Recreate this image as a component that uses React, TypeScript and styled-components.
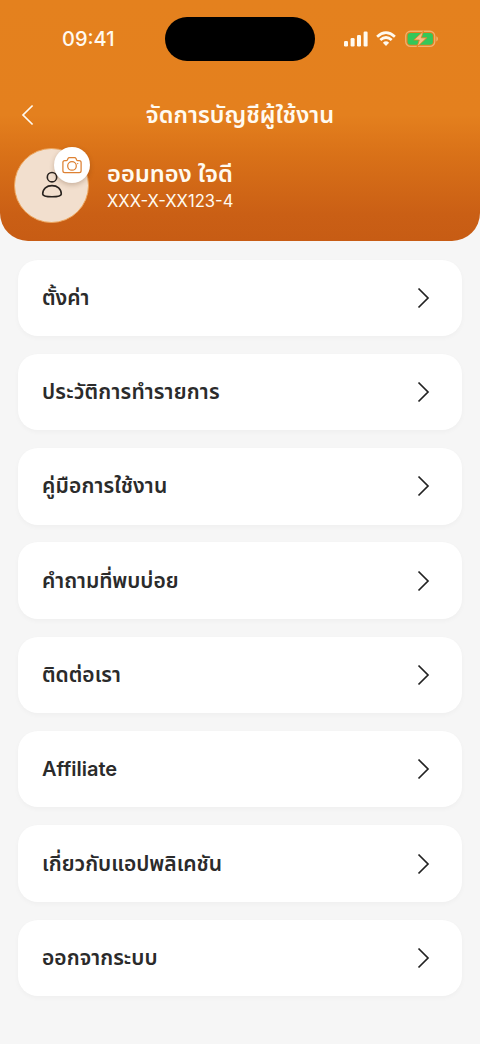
import React from 'react';
import styled, { createGlobalStyle } from 'styled-components';

const GlobalStyle = createGlobalStyle`
  * { box-sizing: border-box; }
  body {
    margin: 0;
    background: #f6f6f6;
    font-family: Inter, "Noto Sans Thai", "Noto Sans", sans-serif;
  }
`;

const Screen = styled.div`
  width: 480px;
  height: 1044px;
  overflow: hidden;
  background: #f6f6f6;
`;

const Header = styled.header`
  height: 241px;
  border-radius: 0 0 28px 28px;
  background: linear-gradient(180deg, #e4811e 0, #e4801e 115px, #d97118 155px, #ca5f15 215px, #c75c14 241px);
  color: #fffaf0;
`;

const StatusBar = styled.div`
  display: grid;
  grid-template-columns: 165px 150px 165px;
  height: 78px;
  align-items: center;
`;

const Clock = styled.span`
  padding-left: 62px;
  font-size: 20px;
  font-weight: 550;
  line-height: 24px;
`;

const Island = styled.div`
  height: 44px;
  border-radius: 22px;
  background: #000;
`;

const StatusIcons = styled.div`
  display: flex;
  align-items: center;
  gap: 8.3px;
  padding-left: 29px;
  svg { display: block; }
`;

const TitleBar = styled.div`
  display: grid;
  grid-template-columns: 60px 1fr 60px;
  align-items: center;
  height: 74px;
`;

const BackButton = styled.button`
  display: flex;
  width: 44px;
  height: 44px;
  padding: 0 0 0 21px;
  align-items: center;
  border: 0;
  background: none;
  color: inherit;
`;

const Title = styled.h1`
  margin: 0;
  text-align: center;
  font-size: 23.5px;
  font-weight: 600;
  line-height: 34px;
  white-space: nowrap;
`;

const Profile = styled.section`
  display: flex;
  align-items: center;
  gap: 18px;
  height: 76px;
  margin-top: -5px;
  padding-left: 14px;
`;

const Avatar = styled.div`
  position: relative;
  display: flex;
  align-items: center;
  justify-content: center;
  width: 75px;
  height: 75px;
  border: 1px solid #eda55c;
  border-radius: 50%;
  background: #f2dfce;
`;

const CameraButton = styled.button`
  position: absolute;
  top: -1.5px;
  right: -2px;
  display: flex;
  align-items: center;
  justify-content: center;
  width: 36px;
  height: 36px;
  padding: 0;
  border: 0;
  border-radius: 50%;
  background: #fff;
  box-shadow: 0 2px 5px rgba(80, 40, 10, 0.25);
`;

const Identity = styled.div`
  display: flex;
  flex-direction: column;
  padding-top: 2px;
  white-space: nowrap;
`;

const Name = styled.span`
  font-size: 23.7px;
  font-weight: 600;
  line-height: 30px;
`;

const Account = styled.span`
  font-size: 16.6px;
  line-height: 24px;
`;

const Menu = styled.nav`
  display: flex;
  flex-direction: column;
  gap: 17.8px;
  padding: 18.5px 18px 0;
`;

const MenuItem = styled.a`
  display: flex;
  align-items: center;
  justify-content: space-between;
  height: 76.5px;
  padding: 0 32px 0 24px;
  border-radius: 20px;
  background: #fff;
  box-shadow: 0 2px 5px rgba(0, 0, 0, 0.03);
  color: #2b2b2b;
`;

const Label = styled.span<{ $size?: number; $tracking?: number }>`
  font-size: ${({ $size = 21 }) => $size}px;
  font-weight: 600;
  line-height: 32px;
  letter-spacing: ${({ $tracking = 0 }) => $tracking}px;
  white-space: nowrap;
`;

const SignalIcon = () => (
  <svg width="24" height="16" viewBox="0 0 24 16" fill="#fffaf0">
    <rect x="0" y="10" width="4" height="5.5" rx="1.2" />
    <rect x="6.6" y="7" width="4" height="8.5" rx="1.2" />
    <rect x="13" y="4" width="4" height="11.5" rx="1.2" />
    <rect x="19.6" y="0.5" width="4" height="15" rx="1.2" />
  </svg>
);

const WifiIcon = () => (
  <svg width="20" height="16" viewBox="0 0 20 16" fill="none" stroke="#fffaf0" strokeWidth="2.7">
    <path d="M1.1 5.7Q10-2.3 18.9 5.7" />
    <path d="M4.3 9.1Q10 3.9 15.7 9.1" />
    <path d="M6.9 11.7Q10 9 13.1 11.7L10 15z" fill="#fffaf0" stroke="none" />
  </svg>
);

const BatteryIcon = () => (
  <svg width="34" height="18" viewBox="0 0 34 18">
    <rect x="0.75" y="1.25" width="29" height="15.2" rx="4.8" fill="none" stroke="#f0b16d" strokeWidth="1.3" />
    <path d="M31.3 6.3v5.2c2.2-1 2.2-4.2 0-5.2z" fill="#f0b16d" />
    <rect x="2.6" y="3" width="25.3" height="11.7" rx="3" fill="#34c759" />
    <path d="M18.6 1L8.8 10h5.5L12 17l9.8-9.2h-5.5z" fill="#f6bd85" stroke="#e4811e" strokeWidth="0.8" />
  </svg>
);

const UserIcon = () => (
  <svg width="22" height="28" viewBox="0 0 22 28" fill="none" stroke="#29231f" strokeWidth="1.6">
    <circle cx="11" cy="6.2" r="4.7" />
    <path d="M1.7 23.1C1.7 17.8 5.7 14.6 11 14.6S20.3 17.8 20.3 23.1Q20 25.8 11 25.8T1.7 23.1z" />
  </svg>
);

const CameraIcon = () => (
  <svg width="20" height="18" viewBox="0 0 20 18" fill="none" stroke="#dd8133" strokeWidth="1.25" strokeLinejoin="round">
    <path d="M2.8 4.6h1.4q.9 0 1.3-.9l.5-1.1q.4-.9 1.4-.9h5.2q1 0 1.4.9l.5 1.1q.4.9 1.3.9h1.4q1.9 0 1.9 1.9v8.3q0 1.9-1.9 1.9H2.8q-1.9 0-1.9-1.9V6.5q0-1.9 1.9-1.9z" />
    <circle cx="10" cy="9.9" r="4.3" />
    <circle cx="15.7" cy="7.6" r=".7" fill="#dd8133" stroke="none" />
  </svg>
);

const ChevronIcon = () => (
  <svg width="14" height="22" viewBox="0 0 14 22" fill="none" stroke="#222" strokeWidth="1.7">
    <path d="M2.5 1.5L12 11l-9.5 9.5" />
  </svg>
);

const items = [
  { label: 'ตั้งค่า' },
  { label: 'ประวัติการทำรายการ', tracking: 0.2 },
  { label: 'คู่มือการใช้งาน', tracking: 0.15 },
  { label: 'คำถามที่พบบ่อย', tracking: -0.05 },
  { label: 'ติดต่อเรา' },
  { label: 'Affiliate', size: 20 },
  { label: 'เกี่ยวกับแอปพลิเคชัน' },
  { label: 'ออกจากระบบ', tracking: 0.05 },
];

export default function App() {
  return (
    <Screen>
      <GlobalStyle />
      <Header>
        <StatusBar>
          <Clock>09:41</Clock>
          <Island />
          <StatusIcons><SignalIcon /><WifiIcon /><BatteryIcon /></StatusIcons>
        </StatusBar>
        <TitleBar>
          <BackButton aria-label="ย้อนกลับ">
            <svg width="14" height="22" viewBox="0 0 14 22" fill="none" stroke="currentColor" strokeWidth="1.7">
              <path d="M11.6 1.5L2 11l9.6 9.5" />
            </svg>
          </BackButton>
          <Title>จัดการบัญชีผู้ใช้งาน</Title>
        </TitleBar>
        <Profile>
          <Avatar>
            <UserIcon />
            <CameraButton aria-label="เปลี่ยนรูป"><CameraIcon /></CameraButton>
          </Avatar>
          <Identity>
            <Name>ออมทอง ใจดี</Name>
            <Account>XXX-X-XX123-4</Account>
          </Identity>
        </Profile>
      </Header>
      <Menu>
        {items.map(({ label, tracking, size }) => (
          <MenuItem key={label}>
            <Label $tracking={tracking} $size={size}>{label}</Label>
            <ChevronIcon />
          </MenuItem>
        ))}
      </Menu>
    </Screen>
  );
}
